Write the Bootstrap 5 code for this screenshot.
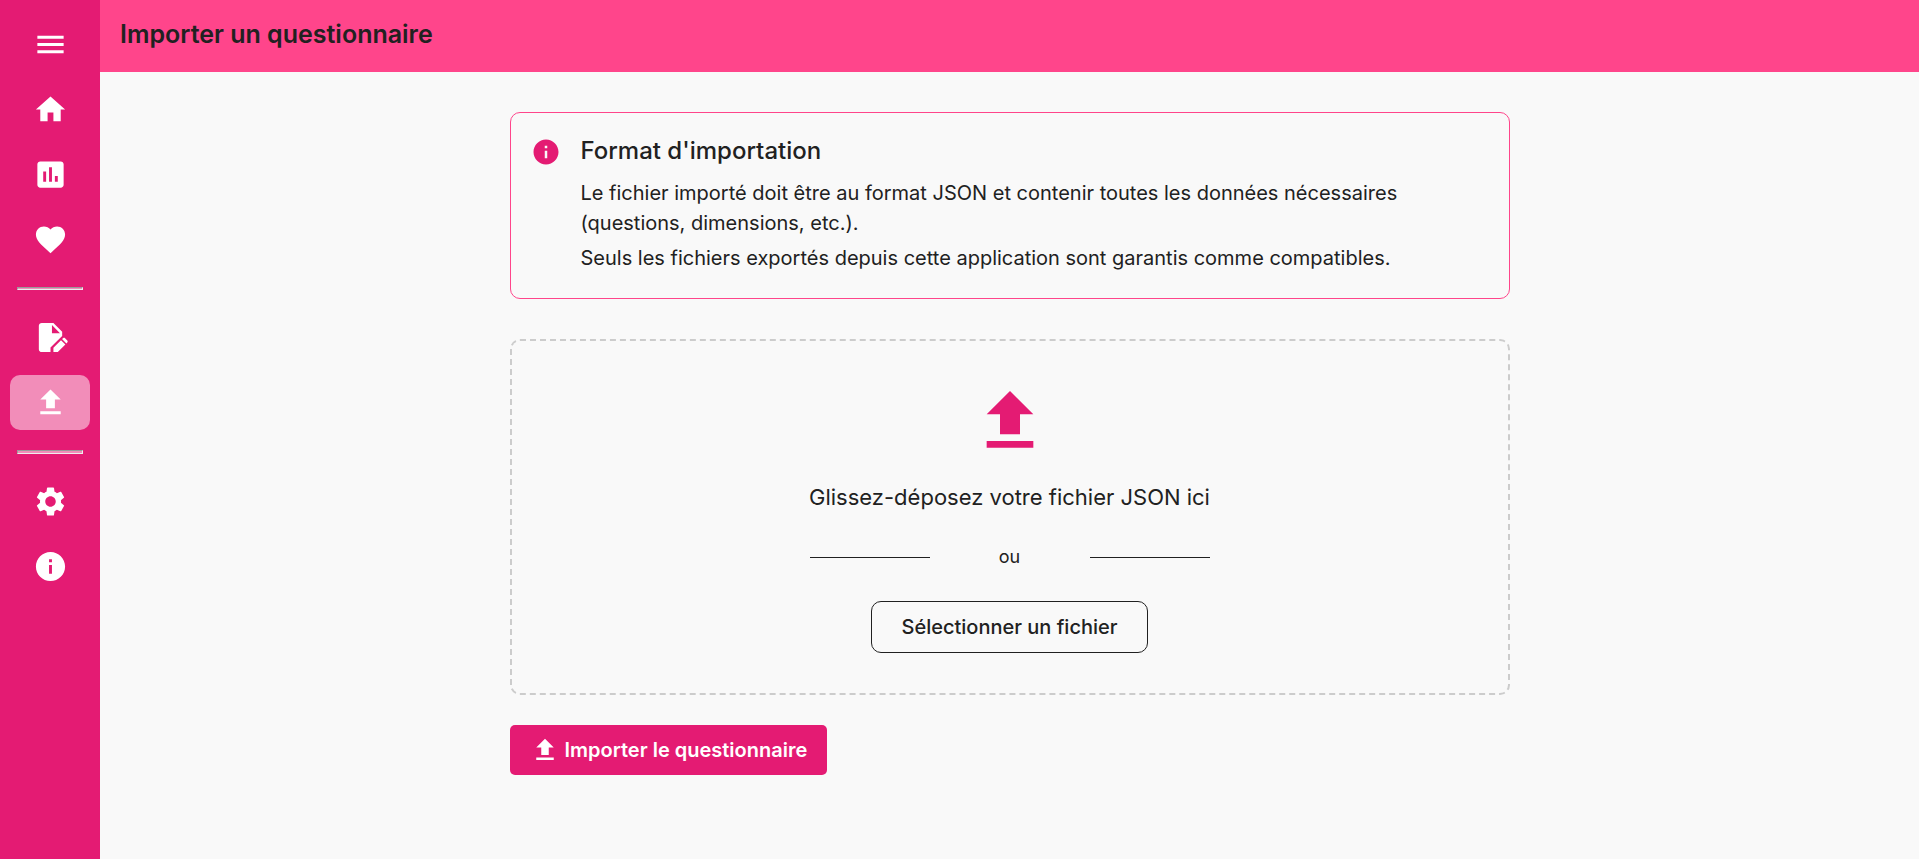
<!DOCTYPE html>
<html lang="fr">
<head>
<meta charset="utf-8">
<meta name="viewport" content="width=device-width, initial-scale=1">
<title>Importer un questionnaire</title>
<link rel="stylesheet" href="https://cdn.jsdelivr.net/npm/bootstrap@5.3.0/dist/css/bootstrap.min.css">
<style>
:root { --brand: #e41b73; --brand-light: #ff458b; --ink: #212121; }
body { font-family: Inter, "Liberation Sans", sans-serif; color: var(--ink); background: #f9f9f9; }
.side-rail { width: 100px; padding: 17px 10px; gap: 10px; background: var(--brand); }
.side-rail button, .side-rail a { height: 55px; border-radius: 10px; color: #fff; }
.side-rail .current { background: rgba(255, 255, 255, .5); }
.side-rail svg { width: 35px; height: 35px; }
.side-rail hr { width: 66px; height: 3px; margin: 10px 0; border: 1px solid; border-color: #9a9a9a #eee #eee #9a9a9a; opacity: 1; background: #f18dba; }
.side-rail .current + hr { height: 4px; }
svg { fill: currentColor; flex: none; }
.top-bar { height: 72px; padding: 0 20px 4px; background: var(--brand-light); }
.top-bar h1 { font-size: 25px; font-weight: 600; line-height: 32px; }
.page-body { max-width: 1000px; margin-top: 40px; }
.format-note { border: 1px solid var(--brand-light); border-radius: 10px; padding: 20px 20px 25px; gap: 20px; margin-bottom: 40px; }
.format-note svg { width: 30px; height: 30px; margin-top: 4px; color: var(--brand); }
.format-note h2 { font-size: 24px; font-weight: 500; line-height: 36px; margin-bottom: 9px; }
.format-note p { font-size: 20px; line-height: 30px; margin-bottom: 5px; }
.drop-zone { border: 2px dashed #ccc; border-radius: 10px; padding: 40px; }
.drop-zone > svg { width: 80px; height: 80px; color: var(--brand); }
.drop-zone p { font-size: 22px; line-height: 32px; margin: 20px 0; }
.or-row { width: 400px; font-size: 18px; line-height: 28px; margin: 10px 0 30px; }
.or-row hr { width: 120px; height: 1px; margin: 0; border: 0; background: var(--ink); opacity: 1; }
.pick-file { border: 1px solid var(--ink); border-radius: 10px; padding: 10px 30px; font-size: 20px; font-weight: 500; line-height: 30px; color: var(--ink); }
.send-file { margin-top: 30px; border: 0; border-radius: 5px; padding: 10px 20px; gap: 5px; font-size: 20px; font-weight: 600; line-height: 30px; color: #fff; background: var(--brand); }
.send-file svg { width: 30px; height: 30px; }
</style>
<script src="https://cdn.jsdelivr.net/npm/bootstrap@5.3.0/dist/js/bootstrap.bundle.min.js" defer></script>
</head>
<body>
<svg class="d-none" aria-hidden="true">
  <symbol id="upload" viewBox="0 0 24 24"><path d="M9 16h6v-6h4l-7-7-7 7h4v6zm-4 2h14v2H5v-2z"/></symbol>
  <symbol id="info" viewBox="0 0 24 24"><path d="M12 2C6.48 2 2 6.48 2 12s4.480 10 10 10 10-4.480 10-10S17.520 2 12 2zm1 15h-2v-6h2v6zm0-8h-2V7h2v2z"/></symbol>
</svg>
<div class="d-flex min-vh-100">
  <nav class="side-rail d-flex flex-column align-items-center flex-shrink-0" aria-label="Navigation principale">
    <button type="button" class="btn border-0 p-0 w-100 d-flex align-items-center justify-content-center" aria-label="Menu"><svg viewBox="0 0 24 24"><path d="M3 18h18v-2H3v2zm0-5h18v-2H3v2zm0-7v2h18V6H3z"/></svg></button>
    <a href="#" class="w-100 d-flex align-items-center justify-content-center" aria-label="Accueil"><svg viewBox="0 0 24 24"><path d="M10 20v-6h4v6h5v-8h3L12 3 2 12h3v8z"/></svg></a>
    <a href="#" class="w-100 d-flex align-items-center justify-content-center" aria-label="Statistiques"><svg viewBox="0 0 24 24"><path d="M19 3H5c-1.100 0-2 .9-2 2v14c0 1.100.9 2 2 2h14c1.100 0 2-.9 2-2V5c0-1.100-.9-2-2-2zM9 17H7v-7h2v7zm4 0h-2V7h2v10zm4 0h-2v-4h2v4z"/></svg></a>
    <a href="#" class="w-100 d-flex align-items-center justify-content-center" aria-label="Favoris"><svg viewBox="0 0 24 24"><path d="M12 21.350l-1.450-1.320C5.400 15.360 2 12.280 2 8.500 2 5.420 4.420 3 7.500 3c1.740 0 3.410.81 4.500 2.090C13.090 3.810 14.760 3 16.500 3 19.580 3 22 5.420 22 8.500c0 3.780-3.400 6.860-8.550 11.540L12 21.350z"/></svg></a>
    <hr>
    <a href="#" class="w-100 d-flex align-items-center justify-content-center" aria-label="Créer un questionnaire"><svg viewBox="0 0 24 24"><path fill-rule="evenodd" d="M6 2c-1.100 0-2 .9-2 2v16c0 1.100.9 2 2 2h6v-3.100l8-8V8l-6-6H6zM13 9V3.500L18.500 9zM14 22v-3l5.200-5.200 3 3L17 22zM22.900 16.100l-3-3 .7-.6c.4-.4 1-.4 1.400 0l1.500 1.500c.4.400.4 1 0 1.400z"/></svg></a>
    <a href="#" class="current w-100 d-flex align-items-center justify-content-center" aria-label="Importer" aria-current="page"><svg><use href="#upload"/></svg></a>
    <hr>
    <a href="#" class="w-100 d-flex align-items-center justify-content-center" aria-label="Paramètres"><svg viewBox="0 0 24 24"><path d="M19.140 12.940c.04-.3.060-.61.060-.94 0-.32-.02-.64-.07-.94l2.030-1.580c.18-.14.230-.41.120-.61l-1.920-3.320c-.12-.22-.37-.29-.59-.22l-2.390.96c-.5-.38-1.030-.7-1.620-.94L14.400 2.810c-.04-.24-.24-.41-.48-.41h-3.840c-.24 0-.43.170-.47.410l-.36 2.540c-.59.240-1.130.570-1.620.940l-2.390-.96c-.22-.08-.47 0-.59.220L2.740 8.870c-.12.210-.08.470.120.610l2.030 1.580c-.05.3-.09.630-.09.940s.02.640.070.940l-2.030 1.580c-.18.140-.23.410-.12.610l1.920 3.320c.12.220.370.290.59.220l2.390-.96c.5.380 1.030.7 1.620.940l.36 2.540c.05.240.240.410.48.410h3.840c.24 0 .440-.17.470-.41l.36-2.540c.59-.24 1.130-.56 1.620-.94l2.390.96c.22.080.47 0 .59-.22l1.920-3.320c.12-.22.070-.47-.12-.61l-2.010-1.580zM12 15.600c-1.980 0-3.600-1.620-3.600-3.600s1.620-3.600 3.600-3.600 3.600 1.620 3.600 3.600-1.620 3.600-3.600 3.600z"/></svg></a>
    <a href="#" class="w-100 d-flex align-items-center justify-content-center" aria-label="À propos"><svg><use href="#info"/></svg></a>
  </nav>
  <div class="flex-grow-1">
    <header class="top-bar d-flex align-items-center"><h1 class="m-0">Importer un questionnaire</h1></header>
    <main class="page-body mx-auto">
      <section class="format-note d-flex align-items-start">
        <svg aria-hidden="true"><use href="#info"/></svg>
        <div>
          <h2>Format d'importation</h2>
          <p>Le fichier importé doit être au format JSON et contenir toutes les données nécessaires (questions, dimensions, etc.).</p>
          <p class="mb-0">Seuls les fichiers exportés depuis cette application sont garantis comme compatibles.</p>
        </div>
      </section>
      <section class="drop-zone d-flex flex-column align-items-center">
        <svg aria-hidden="true"><use href="#upload"/></svg>
        <p>Glissez-déposez votre fichier JSON ici</p>
        <div class="or-row d-flex align-items-center justify-content-between"><hr><span>ou</span><hr></div>
        <button type="button" class="btn pick-file">Sélectionner un fichier</button>
      </section>
      <button type="button" class="btn send-file d-flex align-items-center"><svg aria-hidden="true"><use href="#upload"/></svg>Importer le questionnaire</button>
    </main>
  </div>
</div>
</body>
</html>
